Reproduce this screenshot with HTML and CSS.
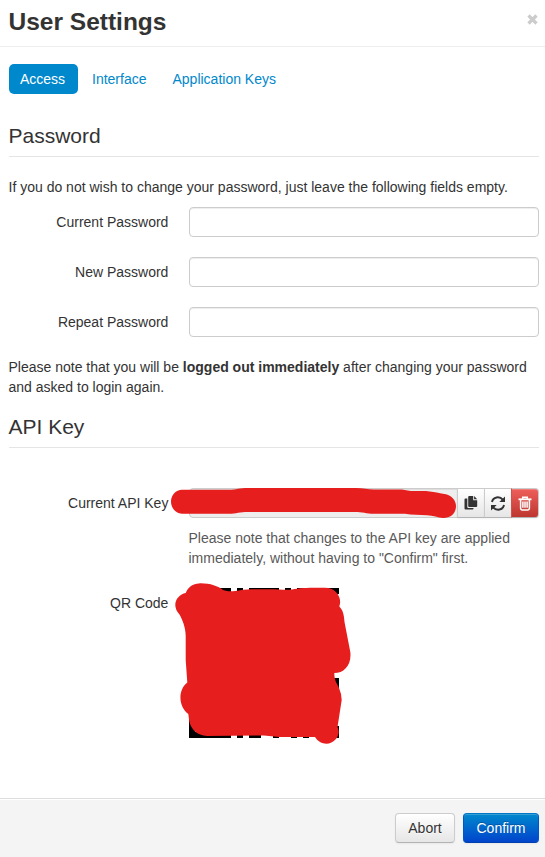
FILE: index.html
```html
<!DOCTYPE html>
<html lang="en">
<head>
<meta charset="utf-8">
<title>User Settings</title>
<link rel="stylesheet" href="styles.css">
</head>
<body>
<div class="modal">
  <header class="modal-header">
    <h3>User Settings</h3>
    <button class="close" aria-label="Close"><svg width="11" height="11" viewBox="0 0 11 11"><path d="M1.500 1.500 9.500 9.500M9.500 1.500 1.500 9.500" stroke="#ccc" stroke-width="3.200"/></svg></button>
  </header>
  <main class="modal-body">
    <nav class="pills">
      <a class="active">Access</a>
      <a>Interface</a>
      <a>Application Keys</a>
    </nav>
    <section>
      <h4 class="legend">Password</h4>
      <p>If you do not wish to change your password, just leave the following fields empty.</p>
      <div class="group"><label for="current">Current Password</label><input id="current" type="password"></div>
      <div class="group"><label for="new">New Password</label><input id="new" type="password"></div>
      <div class="group"><label for="repeat">Repeat Password</label><input id="repeat" type="password"></div>
      <p>Please note that you will be <strong>logged out immediately</strong> after changing your password and asked to login again.</p>
    </section>
    <section>
      <h4 class="legend api">API Key</h4>
      <div class="group">
        <label for="key">Current API Key</label>
        <div class="controls">
          <div class="append">
            <input id="key" type="text" readonly>
            <button class="btn" aria-label="Copy"><svg width="14" height="14" viewBox="0 0 14 14"><path fill="#333" d="M5.200 0H9.200V4.200H13.200V10Q13.200 11 12.200 11H5.200Q4.200 11 4.200 10V1Q4.200 0 5.200 0ZM10.100 0 13.200 3.300H10.100ZM1.500 2.500H3.300V11Q3.300 12 4.300 12H9.500V12.500Q9.500 13.500 8.500 13.500H1.500Q.5 13.500.5 12.500V3.500Q.5 2.500 1.500 2.500Z"/></svg></button>
            <button class="btn" aria-label="Generate"><svg width="16" height="15" viewBox="0 0 16 15"><path fill="none" stroke="#333" stroke-width="2" d="M2 6C3 .8 9.500-.3 12.800 3.700M14 9c-1 5.200-7.500 6.300-10.800 2.300"/><path fill="#333" d="M15 .5V6H9.300zM1 14.500V9H6.700z"/></svg></button>
            <button class="btn danger" aria-label="Delete"><svg width="14" height="15" viewBox="0 0 14 15"><path fill="none" stroke="#fff" stroke-width="1.500" d="M4.700 3V1.200h4.600v2M2.600 3.500V12q0 1.900 1.400 1.900h6q1.400 0 1.400-1.900V3.500M4.900 5.500v6.300M7 5.500v6.300M9.100 5.500v6.300"/><path fill="#fff" d="M.5 2.400h13V4.200H.5z"/></svg></button>
            <svg class="scribble key-mark" width="290" height="35" viewBox="169 486 290 35"><path d="M171 501.700C171 495 176 489.700 182 489.700H229C236 489.700 240 488 248 488H356C363 488 368 489.500 374 489.500H400C405 489.500 407 491 413 491H426C434 492 440 493 446 494.300C452 495.500 456 501 456 506C456 514 450 518.300 443 518C438 517.500 433 515.500 427 515.200C420 514.800 412 514.800 405 513.700H374C366 513.700 363 512 354 512H248C240 512 236 513.700 229 513.700H182C176 513.700 171 508 171 501.700Z"/></svg>
          </div>
          <span class="help">Please note that changes to the API key are applied immediately, without having to "Confirm" first.</span>
        </div>
      </div>
      <div class="group">
        <label>QR Code</label>
        <div class="qr">
          <svg width="150" height="150" viewBox="0 0 25 25" shape-rendering="crispEdges"><path d="M0 0h7v1H0zM8 0h1v1H8zM10 0h5v1h-5zM16 0h1v1h-1zM18 0h7v1h-7zM24 15h1v2h-1zM24 23h1v2h-1zM0 18h1v7H0zM0 24h7v1H0zM8 24h1v1H8zM10 24h2v1h-2zM14 24h1v1h-1zM17 24h1v1h-1zM19 24h1v1h-1z"/></svg>
          <svg class="scribble qr-mark" width="174" height="164" viewBox="179 582 174 164"><path d="M175.300 605C175.300 599 180 594 185.700 593C188 587 193 583.500 199 583.400C209 583 218 586 223 590C228 592 235 591 239 590.500C247 589 254 589.500 265 589.300C276 589 286 590.300 292 589.500C300 587.700 309 587.600 325 587.700C334 588 338 593 339.500 598C340.700 602 340 604 339.300 606.500C343 610 344 615 344.500 622L350.300 652C351.800 665 344 673 334.300 673C334.300 681 337 683 339 688Q341.700 694 341.700 700L337.500 727C339.500 731 339 735 336 739C330 746 320 745 315 737H282C274 737 269 735.400 261 735.400L207 736C197 735.500 191 729 189.300 721.500L188.300 714C178.500 707 177.500 690 187.300 682.500L185.700 660V636C185.700 627 182 619 179.500 614.500Q175.300 610 175.300 605Z"/></svg>
        </div>
      </div>
    </section>
  </main>
  <footer class="modal-footer">
    <button class="btn abort">Abort</button>
    <button class="btn primary">Confirm</button>
  </footer>
</div>
</body>
</html>
```
FILE: styles.css
```css
* { box-sizing: border-box; }
body { margin: 0; background: #fff; color: #333; font: 14px/20px "Liberation Sans", Arial, sans-serif; overflow: hidden; }
button, input { font: inherit; margin: 0; }
.modal { height: 857px; display: flex; flex-direction: column; }
.modal-header { height: 47px; flex: none; display: flex; justify-content: space-between; padding: 7px 7px 0 8.5px; border-bottom: 1px solid #eee; }
h3 { margin: 0; font-size: 24.5px; line-height: 30px; }
.close { border: 0; padding: 0; background: none; height: 11px; margin-top: 7px; line-height: 0; }
.modal-body { flex: 1; padding: 17px 6px 0 9px; }
.pills { display: flex; gap: 2px; height: 52px; }
.pills a { height: 30px; padding: 5px 12px; color: #08c; border-radius: 5px; }
.pills .active { width: 69px; background: #08c; color: #fff; padding: 5px 11px; }
.legend { margin: 0 0 20px; height: 41px; font-size: 21px; font-weight: 400; line-height: 40px; border-bottom: 1px solid #e5e5e5; text-indent: -.5px; }
.api { margin-bottom: 40px; }
p { margin: 0 0 10px -.5px; }
.group { display: flex; gap: 20px; margin-bottom: 20px; }
.group label { width: 160px; flex: none; padding: 5px .6px 0 0; text-align: right; }
.group input { flex: 1; min-width: 0; height: 30px; padding: 4px 6px; border: 1px solid #ccc; border-radius: 4px; background: #fff; box-shadow: inset 0 1px 1px rgba(0,0,0,.075); }
.controls { flex: 1; }
.append { display: flex; position: relative; }
.group .append input { background: #eee; border-radius: 4px 0 0 4px; }
.btn { height: 30px; padding: 4px 12px; border: 1px solid #ccc; border-bottom-color: #b3b3b3; border-radius: 4px; color: #333; background: linear-gradient(#fff, #e6e6e6); box-shadow: inset 0 1px 0 rgba(255,255,255,.2), 0 1px 2px rgba(0,0,0,.05); text-shadow: 0 1px 1px rgba(255,255,255,.75); line-height: 20px; }
.append .btn { width: 28px; padding: 0; margin-left: -1px; border-radius: 0; display: flex; align-items: center; justify-content: center; }
.append .danger { background: linear-gradient(#ee5f5b, #bd362f); border-color: #ccc #ccc #b3b3b3 #d0504b; border-radius: 0 4px 4px 0; }
.help { display: block; margin: 10px 0 0 -.5px; color: #595959; }
.qr { position: relative; width: 150px; height: 150px; }
.qr > svg { display: block; }
.scribble { position: absolute; fill: #e71e1e; overflow: visible; pointer-events: none; }
.key-mark { left: -20px; top: -2px; }
.qr .qr-mark { left: -10px; top: -6px; }
.modal-footer { height: 59px; flex: none; display: flex; justify-content: flex-end; gap: 8px; padding: 14px 6px 0; background: #f4f4f4; border-top: 1px solid #ddd; box-shadow: inset 0 1px 0 #fff; }
.abort { width: 60px; }
.primary { width: 76px; color: #fff; background: linear-gradient(#08c, #04c); border-color: #0077c4 #0055cc #003fae; text-shadow: 0 -1px 0 rgba(0,0,0,.25); }
```
